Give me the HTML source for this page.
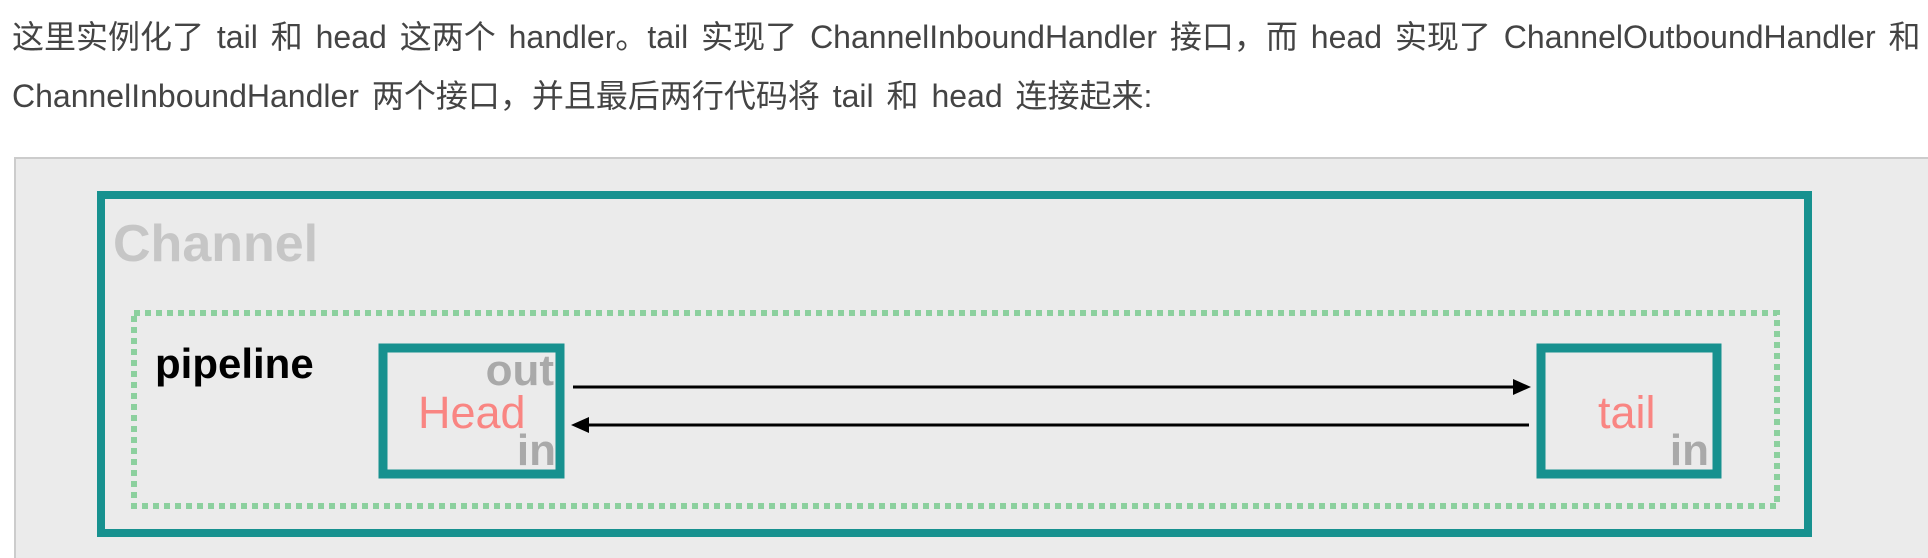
<!DOCTYPE html>
<html><head><meta charset="utf-8"><style>
html,body{margin:0;padding:0;width:1928px;height:558px;overflow:hidden;background:#fff;}
.t{position:absolute;left:12px;font-family:"Liberation Sans","Noto Sans CJK SC",sans-serif;font-size:32px;color:#444;white-space:nowrap;line-height:40px;word-spacing:4px;}
.c{font-size:32px;}
</style></head><body>
<div class="t" style="top:17px;"><span class="c">这里实例化了</span> tail <span class="c">和</span> head <span class="c">这两个</span> handler<span class="c">。</span>tail <span class="c">实现了</span> ChannelInboundHandler <span class="c">接口，而</span> head <span class="c">实现了</span> ChannelOutboundHandler <span class="c">和</span></div>
<div class="t" style="top:76px;">ChannelInboundHandler <span class="c">两个接口，并且最后两行代码将</span> tail <span class="c">和</span> head <span class="c">连接起来</span>:</div>
<svg width="1928" height="558" viewBox="0 0 1928 558" style="position:absolute;left:0;top:0" font-family="Liberation Sans, sans-serif">
<rect x="15" y="158" width="1930" height="420" fill="#ebebeb" stroke="#cccccc" stroke-width="2"/>
<rect x="101" y="195" width="1707" height="338" fill="none" stroke="#17918f" stroke-width="8"/>
<text x="113" y="261" font-size="52" font-weight="bold" fill="#c6c6c6">Channel</text>
<rect x="134" y="313" width="1643" height="193" fill="none" stroke="#8cd09e" stroke-width="6" stroke-dasharray="6 5"/>
<text x="155" y="378" font-size="42" font-weight="bold" fill="#000">pipeline</text>
<rect x="383" y="348" width="177" height="126" fill="none" stroke="#17918f" stroke-width="9"/>
<text x="554" y="385" font-size="44" font-weight="bold" fill="#a9a9a9" text-anchor="end">out</text>
<text x="418" y="428" font-size="45" fill="#f98582">Head</text>
<text x="556" y="465" font-size="44" font-weight="bold" fill="#a9a9a9" text-anchor="end">in</text>
<rect x="1541" y="348" width="176" height="126" fill="none" stroke="#17918f" stroke-width="9"/>
<text x="1598" y="428" font-size="45" fill="#f98582">tail</text>
<text x="1709" y="465" font-size="44" font-weight="bold" fill="#a9a9a9" text-anchor="end">in</text>
<line x1="573" y1="387" x2="1515" y2="387" stroke="#000" stroke-width="3"/>
<polygon points="1513,379 1531,387 1513,395" fill="#000"/>
<line x1="1529" y1="425" x2="587" y2="425" stroke="#000" stroke-width="3"/>
<polygon points="589,417 571,425 589,433" fill="#000"/>
</svg>
</body></html>
